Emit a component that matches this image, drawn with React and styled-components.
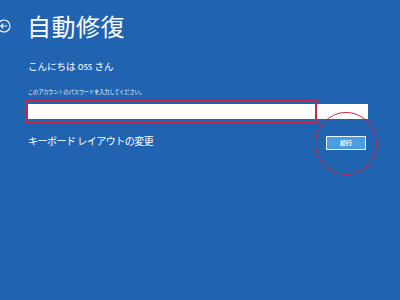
import React from "react";
import styled, { createGlobalStyle } from "styled-components";

const Global = createGlobalStyle`
  html, body { margin: 0; padding: 0; }
  *, *::before, *::after { box-sizing: border-box; }
  body {
    width: 400px; height: 300px; overflow: hidden;
    background: #1f63b1;
    font-family: "Noto Sans CJK JP", "Noto Sans", sans-serif;
    color: #ffffff;
  }
`;

const Page = styled.div`
  position: relative;
  width: 400px;
  height: 300px;
  background: #1f63b1;
`;

const Header = styled.div`
  display: flex;
  align-items: center;
  gap: 16px;
  padding-top: 13px;
  margin-left: -3px;
`;

const BackIcon = styled.svg`
  width: 14px;
  height: 14px;
  flex: none;
`;

const Title = styled.h1`
  margin: 0;
  font-size: 24px;
  line-height: 26px;
  font-weight: 400;
  letter-spacing: 0.5px;
`;

const Content = styled.div`
  width: 368px;
  padding-left: 28px;
  display: flex;
  flex-direction: column;
`;

const Greeting = styled.div`
  margin-top: 21px;
  font-size: 9.5px;
  line-height: 12px;
  letter-spacing: 0;
`;

const Hint = styled.div`
  margin-top: 16px;
  height: 8px;
  font-size: 5.2px;
  line-height: 8px;
  letter-spacing: -0.1px;
`;

const FieldWrap = styled.div`
  position: relative;
  margin-top: 8px;
  height: 15px;
`;

const Field = styled.div`
  height: 15px;
  background: #ffffff;
`;

const Highlight = styled.div`
  position: absolute;
  z-index: 2;
  left: -3px;
  top: -4px;
  width: 292px;
  height: 23px;
  border: 2px solid #c02a45;
  background: transparent;
  pointer-events: none;
`;

const Row = styled.div`
  display: flex;
  justify-content: space-between;
  align-items: flex-start;
  margin-top: 16px;
`;

const LinkText = styled.div`
  font-size: 10px;
  line-height: 12px;
  letter-spacing: -0.5px;
`;

const ButtonWrap = styled.div`
  position: relative;
  margin-right: 2px;
  margin-top: 1px;
`;

const Button = styled.button`
  width: 40px;
  height: 14px;
  padding: 0;
  background: #4a9de0;
  border: 1px solid #e8f2fb;
  color: #ffffff;
  font-family: "Noto Sans CJK JP", sans-serif;
  font-size: 6px;
  line-height: 12px;
  font-weight: 700;
  display: flex;
  align-items: center;
  justify-content: center;
`;

const Circle = styled.div`
  position: absolute;
  left: -11px;
  top: -24px;
  width: 62px;
  height: 63px;
  border: 1.3px solid #c02a45;
  border-radius: 50%;
  pointer-events: none;
`;

export default function App() {
  return (
    <Page>
      <Global />
      <Header>
        <BackIcon viewBox="0 0 14 14">
          <circle cx="7" cy="7" r="6" fill="none" stroke="#fff" strokeWidth="1.1" />
          <path d="M3.8 7 H10.2 M6.2 4.6 L3.8 7 L6.2 9.4" fill="none" stroke="#fff" strokeWidth="1.1" />
        </BackIcon>
        <Title>自動修復</Title>
      </Header>
      <Content>
        <Greeting>こんにちは oss さん</Greeting>
        <Hint>このアカウントのパスワードを入力してください。</Hint>
        <FieldWrap>
          <Field />
          <Highlight />
        </FieldWrap>
        <Row>
          <LinkText>キーボード レイアウトの変更</LinkText>
          <ButtonWrap>
            <Button>続行</Button>
            <Circle />
          </ButtonWrap>
        </Row>
      </Content>
    </Page>
  );
}
